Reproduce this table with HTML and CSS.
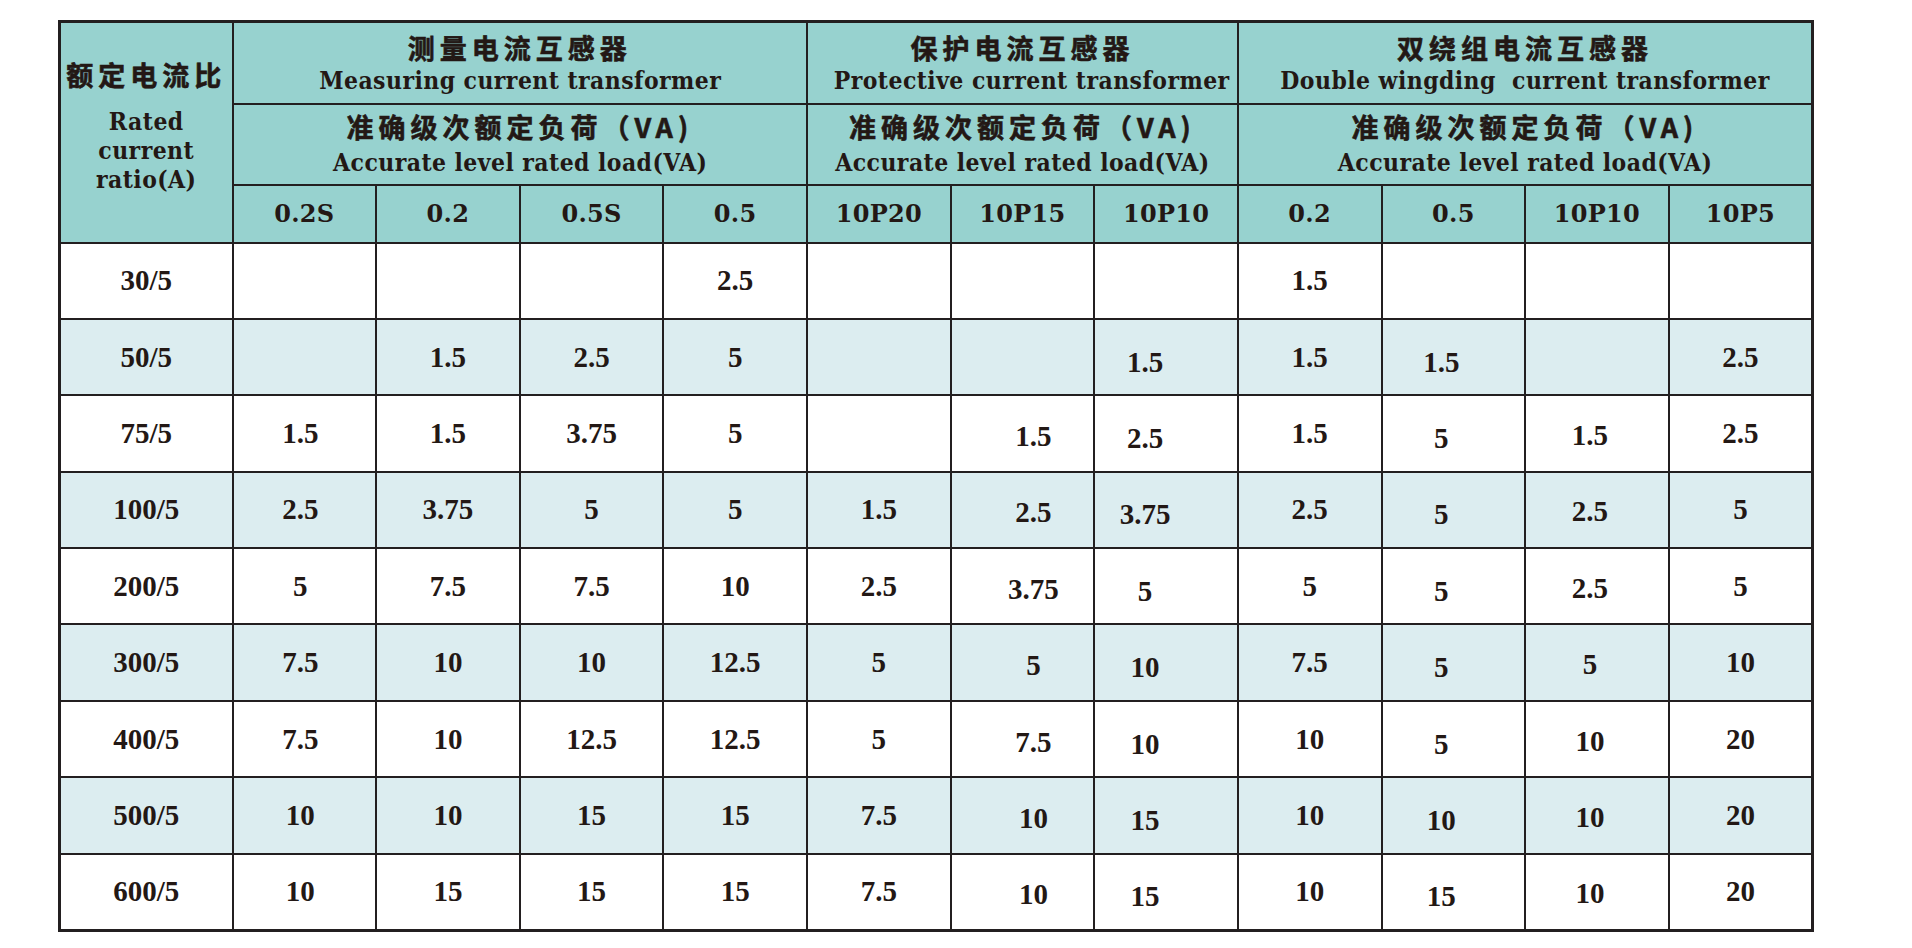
FILE: index.html
```html
<!DOCTYPE html>
<html lang="zh-CN">
<head>
<meta charset="utf-8">
<title>电流互感器 准确级次额定负荷</title>
<link rel="stylesheet" href="styles.css">
</head>
<body>
<table class="spec">
  <colgroup>
    <col class="col-ratio">
    <col span="11" class="col-val">
  </colgroup>
  <thead>
    <tr class="h1">
      <th rowspan="3" class="ratio-head">
        <div class="zh">额定电流比</div>
        <div class="en en-ratio">Rated<br>current<br>ratio(A)</div>
      </th>
      <th colspan="4"><div class="zh">测量电流互感器</div><div class="en">Measuring current transformer</div></th>
      <th colspan="3"><div class="zh">保护电流互感器</div><div class="en">Protective current transformer</div></th>
      <th colspan="4"><div class="zh">双绕组电流互感器</div><div class="en">Double wingding&nbsp; current transformer</div></th>
    </tr>
    <tr class="h2">
      <th colspan="4"><div class="zh">准确级次额定负荷（VA)</div><div class="en">Accurate level rated load(VA)</div></th>
      <th colspan="3"><div class="zh">准确级次额定负荷（VA)</div><div class="en">Accurate level rated load(VA)</div></th>
      <th colspan="4"><div class="zh">准确级次额定负荷（VA)</div><div class="en">Accurate level rated load(VA)</div></th>
    </tr>
    <tr class="h3">
      <th>0.2S</th><th>0.2</th><th>0.5S</th><th>0.5</th>
      <th>10P20</th><th>10P15</th><th>10P10</th>
      <th>0.2</th><th>0.5</th><th>10P10</th><th>10P5</th>
    </tr>
  </thead>
  <tbody>
    <tr><td>30/5</td><td></td><td></td><td></td><td>2.5</td><td></td><td></td><td></td><td>1.5</td><td></td><td></td><td></td></tr>
    <tr><td>50/5</td><td></td><td>1.5</td><td>2.5</td><td>5</td><td></td><td></td><td>1.5</td><td>1.5</td><td>1.5</td><td></td><td>2.5</td></tr>
    <tr><td>75/5</td><td>1.5</td><td>1.5</td><td>3.75</td><td>5</td><td></td><td>1.5</td><td>2.5</td><td>1.5</td><td>5</td><td>1.5</td><td>2.5</td></tr>
    <tr><td>100/5</td><td>2.5</td><td>3.75</td><td>5</td><td>5</td><td>1.5</td><td>2.5</td><td>3.75</td><td>2.5</td><td>5</td><td>2.5</td><td>5</td></tr>
    <tr><td>200/5</td><td>5</td><td>7.5</td><td>7.5</td><td>10</td><td>2.5</td><td>3.75</td><td>5</td><td>5</td><td>5</td><td>2.5</td><td>5</td></tr>
    <tr><td>300/5</td><td>7.5</td><td>10</td><td>10</td><td>12.5</td><td>5</td><td>5</td><td>10</td><td>7.5</td><td>5</td><td>5</td><td>10</td></tr>
    <tr><td>400/5</td><td>7.5</td><td>10</td><td>12.5</td><td>12.5</td><td>5</td><td>7.5</td><td>10</td><td>10</td><td>5</td><td>10</td><td>20</td></tr>
    <tr><td>500/5</td><td>10</td><td>10</td><td>15</td><td>15</td><td>7.5</td><td>10</td><td>15</td><td>10</td><td>10</td><td>10</td><td>20</td></tr>
    <tr><td>600/5</td><td>10</td><td>15</td><td>15</td><td>15</td><td>7.5</td><td>10</td><td>15</td><td>10</td><td>15</td><td>10</td><td>20</td></tr>
  </tbody>
</table>
</body>
</html>
```

FILE: styles.css
```css
html, body {
  margin: 0;
  background: #ffffff;
}

body {
  padding: 20px 0 0 58px;
  color: #231815;
}

.spec {
  border-collapse: collapse;
  table-layout: fixed;
  width: 1756px;
  border: 3px solid #231f20;
}

.col-ratio { width: 173px; }

.spec th,
.spec td {
  border: 2px solid #231f20;
  padding: 0;
  text-align: center;
  vertical-align: middle;
}

.spec thead th {
  background: #97d2cf;
  font-weight: 700;
}

.zh {
  font-family: "Noto Sans CJK SC", sans-serif;
  font-weight: 700;
  font-size: 27px;
  line-height: 36px;
  letter-spacing: 5px;
  white-space: nowrap;
  -webkit-text-stroke: 0.6px #231815;
}

.en {
  font-family: "DejaVu Serif", serif;
  font-weight: 700;
  font-size: 25px;
  line-height: 29px;
  letter-spacing: 0.5px;
  white-space: nowrap;
  transform: scaleX(0.88);
}

.h1 { height: 82px; }
.h2 { height: 81px; }
.h3 { height: 58px; }

.h2 .en { margin-top: 3px; }
.h2 th { padding-bottom: 2px; }

.spec .ratio-head {
  padding: 0 0 13px;
}

.ratio-head .zh {
  letter-spacing: 5px;
  margin-bottom: 14px;
}

.spec .h3 th {
  font-family: "DejaVu Serif", serif;
  font-weight: 700;
  font-size: 24px;
  letter-spacing: 0.3px;
}

.spec tbody tr { height: 76.4px; }

.spec tbody tr:nth-child(even) td { background: #dcedf0; }

.spec tbody td {
  font-family: "Liberation Serif", "Times New Roman", serif;
  font-weight: 700;
  font-size: 29px;
}

/* slight per-column offsets of the printed values */
.spec tbody td:nth-child(2) { padding-right: 8px; }
.spec tbody td:nth-child(7) { padding-left: 22px; padding-top: 6px; }
.spec tbody td:nth-child(8) { padding-right: 42px; padding-top: 10px; }
.spec tbody td:nth-child(10) { padding-right: 24px; padding-top: 10px; }
.spec tbody td:nth-child(11) { padding-right: 14px; padding-top: 4px; }
```
